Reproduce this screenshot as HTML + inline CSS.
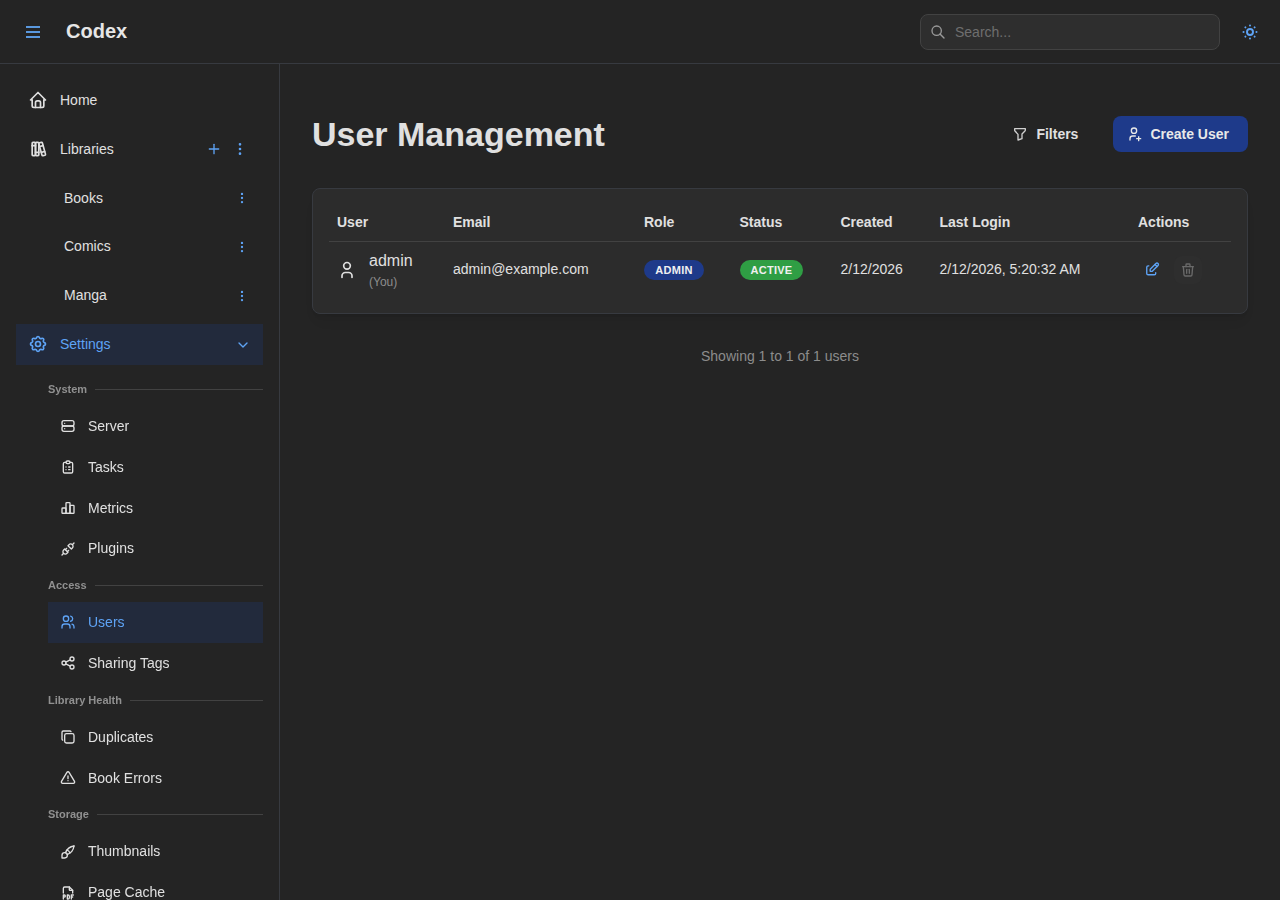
<!DOCTYPE html>
<html><head><meta charset="utf-8">
<style>
*{box-sizing:border-box;margin:0;padding:0}
html,body{width:1280px;height:900px;overflow:hidden;background:#242424;font-family:"Liberation Sans",sans-serif;color:#e0e0e0}
.abs{position:absolute}
svg{display:block;fill:none;stroke:currentColor;stroke-width:2;stroke-linecap:round;stroke-linejoin:round}
#hdr{position:absolute;left:0;top:0;width:1280px;height:64px;border-bottom:1px solid #373a40}
#side{position:absolute;left:0;top:64px;width:280px;height:836px;border-right:1px solid #373a40}
.row{position:absolute;left:16px;width:247px;height:41px}
.t{position:absolute;font-size:14px;line-height:21.7px;white-space:nowrap}
.blue{color:#5ea3f5}
.lbl{position:absolute;left:48px;font-size:11px;font-weight:700;color:#8c8c8c;line-height:13px;white-space:nowrap}
.line{position:absolute;height:1px;background:#424242}
.dv{position:absolute;left:48px;width:215px;display:flex;align-items:center;height:13px}
.dv b{font-size:11px;font-weight:700;color:#909090;line-height:13px;white-space:nowrap}
.dv i{flex:1;height:1px;background:#424242;margin-left:8px}
.ico{position:absolute}
</style></head><body>
<div id="hdr"></div>
<div id="side"></div>

<!-- header -->
<div class="abs" style="left:25.9px;top:26px;width:14.3px;height:1.6px;background:#5a98de"></div>
<div class="abs" style="left:25.9px;top:31px;width:14.3px;height:1.6px;background:#5a98de"></div>
<div class="abs" style="left:25.9px;top:36px;width:14.3px;height:1.6px;background:#5a98de"></div>
<div class="abs" style="left:66px;top:18px;font-size:20px;font-weight:700;line-height:26px;color:#e6e6e6">Codex</div>

<div class="abs" style="left:920px;top:14px;width:300px;height:36px;border:1px solid #424242;border-radius:8px;background:#2e2e2e"></div>
<svg class="ico" style="left:930px;top:24px;color:#9a9a9a" width="16" height="16" viewBox="0 0 24 24"><path d="M10 10m-7 0a7 7 0 1 0 14 0a7 7 0 1 0 -14 0"/><path d="M21 21l-6 -6"/></svg>
<div class="t" style="left:955px;top:22px;color:#6e6e6e">Search...</div>
<svg class="ico blue" style="left:1240px;top:22px" width="20" height="20" viewBox="-0.375 -0.375 24.75 24.75"><circle cx="12" cy="12" r="3.7" stroke-width="2.4"/><g stroke-width="2.5"><path d="M4 12h.01"/><path d="M12 4v.01"/><path d="M20 12h.01"/><path d="M12 20v.01"/><path d="M6.31 6.31l-.01 -.01"/><path d="M17.71 6.31l-.01 -.01"/><path d="M17.7 17.7l.01 .01"/><path d="M6.3 17.7l.01 .01"/></g></svg>

<!-- sidebar -->
<svg class="ico" style="left:28px;top:90px;color:#e0e0e0" width="20" height="20" viewBox="0 0 24 24"><path d="M5 12l-2 0l9 -9l9 9l-2 0"/><path d="M5 12v7a2 2 0 0 0 2 2h10a2 2 0 0 0 2 -2v-7"/><path d="M9 21v-6a2 2 0 0 1 2 -2h2a2 2 0 0 1 2 2v6"/></svg>
<div class="t" style="left:60px;top:90.4px">Home</div>

<svg class="ico" style="left:28px;top:139px;color:#e0e0e0" width="20" height="20" viewBox="0 0 24 24"><path d="M5 4m0 1a1 1 0 0 1 1 -1h2a1 1 0 0 1 1 1v14a1 1 0 0 1 -1 1h-2a1 1 0 0 1 -1 -1z"/><path d="M9 4m0 1a1 1 0 0 1 1 -1h2a1 1 0 0 1 1 1v14a1 1 0 0 1 -1 1h-2a1 1 0 0 1 -1 -1z"/><path d="M5 8h4"/><path d="M9 16h4"/><path d="M13.803 4.56l2.184 -.53c.562 -.135 1.133 .19 1.282 .732l3.695 13.418a1.02 1.02 0 0 1 -.634 1.219l-.133 .041l-2.184 .53c-.562 .135 -1.133 -.19 -1.282 -.732l-3.695 -13.418a1.02 1.02 0 0 1 .634 -1.219l.133 -.041z"/><path d="M14 9l4 -1"/><path d="M16 16l3.923 -.98"/></svg>
<div class="t" style="left:60px;top:139.4px">Libraries</div>
<svg class="ico blue" style="left:206px;top:141px" width="16" height="16" viewBox="0 0 24 24"><path d="M12 5l0 14"/><path d="M5 12l14 0"/></svg>
<svg class="ico blue" style="left:232px;top:141px" width="16" height="16" viewBox="0 0 24 24"><path d="M12 12m-1 0a1 1 0 1 0 2 0a1 1 0 1 0 -2 0"/><path d="M12 19m-1 0a1 1 0 1 0 2 0a1 1 0 1 0 -2 0"/><path d="M12 5m-1 0a1 1 0 1 0 2 0a1 1 0 1 0 -2 0"/></svg>

<div class="t" style="left:64px;top:188.2px">Books</div>
<svg class="ico blue" style="left:235px;top:191px" width="14" height="14" viewBox="0 0 24 24"><path d="M12 12m-1 0a1 1 0 1 0 2 0a1 1 0 1 0 -2 0"/><path d="M12 19m-1 0a1 1 0 1 0 2 0a1 1 0 1 0 -2 0"/><path d="M12 5m-1 0a1 1 0 1 0 2 0a1 1 0 1 0 -2 0"/></svg>
<div class="t" style="left:64px;top:235.6px">Comics</div>
<svg class="ico blue" style="left:235px;top:240.4px" width="14" height="14" viewBox="0 0 24 24"><path d="M12 12m-1 0a1 1 0 1 0 2 0a1 1 0 1 0 -2 0"/><path d="M12 19m-1 0a1 1 0 1 0 2 0a1 1 0 1 0 -2 0"/><path d="M12 5m-1 0a1 1 0 1 0 2 0a1 1 0 1 0 -2 0"/></svg>
<div class="t" style="left:64px;top:285.4px">Manga</div>
<svg class="ico blue" style="left:235px;top:289.2px" width="14" height="14" viewBox="0 0 24 24"><path d="M12 12m-1 0a1 1 0 1 0 2 0a1 1 0 1 0 -2 0"/><path d="M12 19m-1 0a1 1 0 1 0 2 0a1 1 0 1 0 -2 0"/><path d="M12 5m-1 0a1 1 0 1 0 2 0a1 1 0 1 0 -2 0"/></svg>

<div class="abs" style="left:16px;top:324px;width:247px;height:41px;background:#222a3c"></div>
<svg class="ico blue" style="left:28px;top:334px" width="20" height="20" viewBox="0 0 24 24"><path d="M10.325 4.317c.426 -1.756 2.924 -1.756 3.35 0a1.724 1.724 0 0 0 2.573 1.066c1.543 -.94 3.31 .826 2.37 2.37a1.724 1.724 0 0 0 1.065 2.572c1.756 .426 1.756 2.924 0 3.35a1.724 1.724 0 0 0 -1.066 2.573c.94 1.543 -.826 3.31 -2.37 2.37a1.724 1.724 0 0 0 -2.572 1.065c-.426 1.756 -2.924 1.756 -3.35 0a1.724 1.724 0 0 0 -2.573 -1.066c-1.543 .94 -3.31 -.826 -2.37 -2.37a1.724 1.724 0 0 0 -1.065 -2.572c-1.756 -.426 -1.756 -2.924 0 -3.35a1.724 1.724 0 0 0 1.066 -2.573c-.94 -1.543 .826 -3.31 2.37 -2.37c1 .608 2.296 .07 2.572 -1.065z"/><path d="M9 12a3 3 0 1 0 6 0a3 3 0 0 0 -6 0"/></svg>
<div class="t blue" style="left:60px;top:333.6px">Settings</div>
<svg class="ico blue" style="left:235px;top:336.5px" width="16" height="16" viewBox="0 0 24 24" stroke-width="1.8"><path d="M6 9l6 6l6 -6"/></svg>

<div style="position:absolute;left:0;top:0;width:280px;height:900px;will-change:transform">
<!-- System -->
<div class="dv" style="top:382.7px"><b>System</b><i></i></div>
<svg class="ico" style="left:60px;top:418px;color:#e0e0e0" width="16" height="16" viewBox="0 0 24 24"><path d="M3 4m0 3a3 3 0 0 1 3 -3h12a3 3 0 0 1 3 3v2a3 3 0 0 1 -3 3h-12a3 3 0 0 1 -3 -3z"/><path d="M3 12m0 3a3 3 0 0 1 3 -3h12a3 3 0 0 1 3 3v2a3 3 0 0 1 -3 3h-12a3 3 0 0 1 -3 -3z"/><path d="M7 8l0 .01"/><path d="M7 16l0 .01"/></svg>
<div class="t" style="left:88px;top:416.4px">Server</div>
<svg class="ico" style="left:60px;top:459px;color:#e0e0e0" width="16" height="16" viewBox="0 0 24 24"><path d="M9 5h-2a2 2 0 0 0 -2 2v12a2 2 0 0 0 2 2h10a2 2 0 0 0 2 -2v-12a2 2 0 0 0 -2 -2h-2"/><path d="M9 3m0 2a2 2 0 0 1 2 -2h2a2 2 0 0 1 2 2v0a2 2 0 0 1 -2 2h-2a2 2 0 0 1 -2 -2z"/><path d="M9 12l.01 0"/><path d="M13 12l2 0"/><path d="M9 16l.01 0"/><path d="M13 16l2 0"/></svg>
<div class="t" style="left:88px;top:457.3px">Tasks</div>
<svg class="ico" style="left:60px;top:499.5px;color:#e0e0e0" width="16" height="16" viewBox="0 0 24 24"><path d="M3 13a1 1 0 0 1 1 -1h4a1 1 0 0 1 1 1v6a1 1 0 0 1 -1 1h-4a1 1 0 0 1 -1 -1z"/><path d="M15 9a1 1 0 0 1 1 -1h4a1 1 0 0 1 1 1v10a1 1 0 0 1 -1 1h-4a1 1 0 0 1 -1 -1z"/><path d="M9 5a1 1 0 0 1 1 -1h4a1 1 0 0 1 1 1v14a1 1 0 0 1 -1 1h-4a1 1 0 0 1 -1 -1z"/><path d="M4 20h14"/></svg>
<div class="t" style="left:88px;top:497.8px">Metrics</div>
<svg class="ico" style="left:60px;top:541px;color:#e0e0e0" width="16" height="16" viewBox="0 0 24 24"><path d="M7 12l5 5l-1.5 1.5a3.536 3.536 0 1 1 -5 -5l1.5 -1.5z"/><path d="M17 12l-5 -5l1.5 -1.5a3.536 3.536 0 1 1 5 5l-1.5 1.5z"/><path d="M3 21l2.5 -2.5"/><path d="M18.5 5.5l2.5 -2.5"/><path d="M10 11l-2 2"/><path d="M13 14l-2 2"/></svg>
<div class="t" style="left:88px;top:538.2px">Plugins</div>

<!-- Access -->
<div class="dv" style="top:578.9px"><b>Access</b><i></i></div>
<div class="abs" style="left:48px;top:602px;width:215px;height:41px;background:#222a3c"></div>
<svg class="ico blue" style="left:60px;top:614px" width="16" height="16" viewBox="0 0 24 24"><path d="M9 7m-4 0a4 4 0 1 0 8 0a4 4 0 1 0 -8 0"/><path d="M3 21v-2a4 4 0 0 1 4 -4h4a4 4 0 0 1 4 4v2"/><path d="M16 3.13a4 4 0 0 1 0 7.75"/><path d="M21 21v-2a4 4 0 0 0 -3 -3.85"/></svg>
<div class="t blue" style="left:88px;top:611.6px">Users</div>
<svg class="ico" style="left:60px;top:655px;color:#e0e0e0" width="16" height="16" viewBox="0 0 24 24"><path d="M6 12m-3 0a3 3 0 1 0 6 0a3 3 0 1 0 -6 0"/><path d="M18 6m-3 0a3 3 0 1 0 6 0a3 3 0 1 0 -6 0"/><path d="M18 18m-3 0a3 3 0 1 0 6 0a3 3 0 1 0 -6 0"/><path d="M8.7 10.7l6.6 -3.4"/><path d="M8.7 13.3l6.6 3.4"/></svg>
<div class="t" style="left:88px;top:652.5px">Sharing Tags</div>

<!-- Library Health -->
<div class="dv" style="top:693.8px"><b>Library Health</b><i></i></div>
<svg class="ico" style="left:60px;top:729px;color:#e0e0e0" width="16" height="16" viewBox="0 0 24 24"><path d="M7 7m0 2.667a2.667 2.667 0 0 1 2.667 -2.667h8.666a2.667 2.667 0 0 1 2.667 2.667v8.666a2.667 2.667 0 0 1 -2.667 2.667h-8.666a2.667 2.667 0 0 1 -2.667 -2.667z"/><path d="M4.012 16.737a2.005 2.005 0 0 1 -1.012 -1.737v-10c0 -1.1 .9 -2 2 -2h10c.75 0 1.158 .385 1.5 1"/></svg>
<div class="t" style="left:88px;top:726.5px">Duplicates</div>
<svg class="ico" style="left:60px;top:770px;color:#e0e0e0" width="16" height="16" viewBox="0 0 24 24"><path d="M12 9v4"/><path d="M10.363 3.591l-8.106 13.534a1.914 1.914 0 0 0 1.636 2.871h16.214a1.914 1.914 0 0 0 1.636 -2.87l-8.106 -13.536a1.914 1.914 0 0 0 -3.274 0z"/><path d="M12 16h.01"/></svg>
<div class="t" style="left:88px;top:767.5px">Book Errors</div>

<!-- Storage -->
<div class="dv" style="top:807.7px"><b>Storage</b><i></i></div>
<svg class="ico" style="left:60px;top:844px;color:#e0e0e0" width="16" height="16" viewBox="0 0 24 24"><path d="M3 21v-4a4 4 0 1 1 4 4h-4"/><path d="M21 3a16 16 0 0 0 -12.8 10.2"/><path d="M21 3a16 16 0 0 1 -10.2 12.8"/><path d="M10.6 9a9 9 0 0 1 4.4 4.4"/></svg>
<div class="t" style="left:88px;top:841.4px">Thumbnails</div>
<svg class="ico" style="left:60px;top:885px;color:#e0e0e0" width="16" height="16" viewBox="0 0 24 24"><path d="M14 3v4a1 1 0 0 0 1 1h4"/><path d="M5 12v-7a2 2 0 0 1 2 -2h7l5 5v4"/><path d="M5 18h1.5a1.5 1.5 0 0 0 0 -3h-1.5v6"/><path d="M17 18h2"/><path d="M20 15h-3v6"/><path d="M11 15v6h1a2 2 0 0 0 2 -2v-2a2 2 0 0 0 -2 -2h-1z"/></svg>
<div class="t" style="left:88px;top:881.5px">Page Cache</div>

</div>
<!-- main -->
<div class="abs" style="left:312px;top:112px;font-size:34px;font-weight:700;line-height:44.2px;color:#e0e0e0;white-space:nowrap">User Management</div>

<svg class="ico" style="left:1012px;top:126px;color:#d0d0d0" width="16" height="16" viewBox="0 0 24 24"><path d="M4 4h16v2.172a2 2 0 0 1 -.586 1.414l-4.414 4.414v7l-6 2v-8.5l-4.48 -4.928a2 2 0 0 1 -.52 -1.345v-2.227z"/></svg>
<div class="t" style="left:1036.4px;top:124.2px;font-weight:700">Filters</div>

<div class="abs" style="left:1113px;top:116px;width:135px;height:36px;border-radius:8px;background:#1e3a8a"></div>
<svg class="ico" style="left:1126px;top:126px;color:#e8e8e8" width="16" height="16" viewBox="0 0 24 24"><path d="M8 7a4 4 0 1 0 8 0a4 4 0 0 0 -8 0"/><path d="M16 19h6"/><path d="M19 16v6"/><path d="M6 21v-2a4 4 0 0 1 4 -4h4"/></svg>
<div class="t" style="left:1150.4px;top:124.2px;font-weight:700;color:#e8e8e8">Create User</div>

<div class="abs" style="left:312px;top:188px;width:936px;height:126px;border:1px solid #373a40;border-radius:8px;background:#2c2c2c;box-shadow:0 1px 3px rgba(0,0,0,.05),rgba(0,0,0,.05) 0 10px 15px -5px,rgba(0,0,0,.04) 0 7px 7px -5px"></div>
<div class="line" style="left:329px;top:241px;width:902px;background:#424242"></div>
<div class="t" style="left:337px;top:211.5px;font-weight:700">User</div>
<div class="t" style="left:453px;top:211.5px;font-weight:700">Email</div>
<div class="t" style="left:644px;top:211.5px;font-weight:700">Role</div>
<div class="t" style="left:739.5px;top:211.5px;font-weight:700">Status</div>
<div class="t" style="left:840.5px;top:211.5px;font-weight:700">Created</div>
<div class="t" style="left:939.5px;top:211.5px;font-weight:700">Last Login</div>
<div class="t" style="left:1138px;top:211.5px;font-weight:700">Actions</div>

<svg class="ico" style="left:337px;top:260px;color:#e0e0e0" width="20" height="20" viewBox="0 0 24 24" stroke-width="1.7"><path d="M8 7a4 4 0 1 0 8 0a4 4 0 0 0 -8 0"/><path d="M6 21v-2a4 4 0 0 1 4 -4h4a4 4 0 0 1 4 4v2"/></svg>
<div class="abs" style="left:369px;top:251px;font-size:16px;line-height:20px;white-space:nowrap">admin</div>
<div class="abs" style="left:369px;top:274px;font-size:12px;line-height:16px;color:#8c8c8c;white-space:nowrap">(You)</div>
<div class="t" style="left:453px;top:258.6px">admin@example.com</div>
<div class="abs" style="left:644px;top:260px;width:60px;height:20px;border-radius:10px;background:#1e3a8a;color:#f0f0f0;font-size:11px;font-weight:700;line-height:20px;text-align:center;letter-spacing:0.25px">ADMIN</div>
<div class="abs" style="left:740px;top:260px;width:63px;height:20px;border-radius:10px;background:#2f9e44;color:#f0f0f0;font-size:11px;font-weight:700;line-height:20px;text-align:center;letter-spacing:0.25px">ACTIVE</div>
<div class="t" style="left:840.5px;top:258.6px">2/12/2026</div>
<div class="t" style="left:939.5px;top:258.6px">2/12/2026, 5:20:32 AM</div>
<svg class="ico blue" style="left:1143.7px;top:261px" width="16.5" height="16.5" viewBox="0 0 24 24" stroke-width="1.9"><path d="M7 7h-1a2 2 0 0 0 -2 2v9a2 2 0 0 0 2 2h9a2 2 0 0 0 2 -2v-1"/><path d="M20.385 6.585a2.1 2.1 0 0 0 -2.97 -2.97l-8.415 8.385v3h3l8.415 -8.415z"/><path d="M16 5l3 3"/></svg>
<div class="abs" style="left:1174px;top:256px;width:28px;height:28px;border-radius:8px;background:#2e2e2e"></div>
<svg class="ico" style="left:1180px;top:262px;color:#6a6a6a" width="16" height="16" viewBox="0 0 24 24"><path d="M4 7l16 0"/><path d="M10 11l0 6"/><path d="M14 11l0 6"/><path d="M5 7l1 12a2 2 0 0 0 2 2h8a2 2 0 0 0 2 -2l1 -12"/><path d="M9 7v-3a1 1 0 0 1 1 -1h4a1 1 0 0 1 1 1v3"/></svg>

<div class="t" style="left:701px;top:346.4px;color:#8c8c8c">Showing 1 to 1 of 1 users</div>
</body></html>
